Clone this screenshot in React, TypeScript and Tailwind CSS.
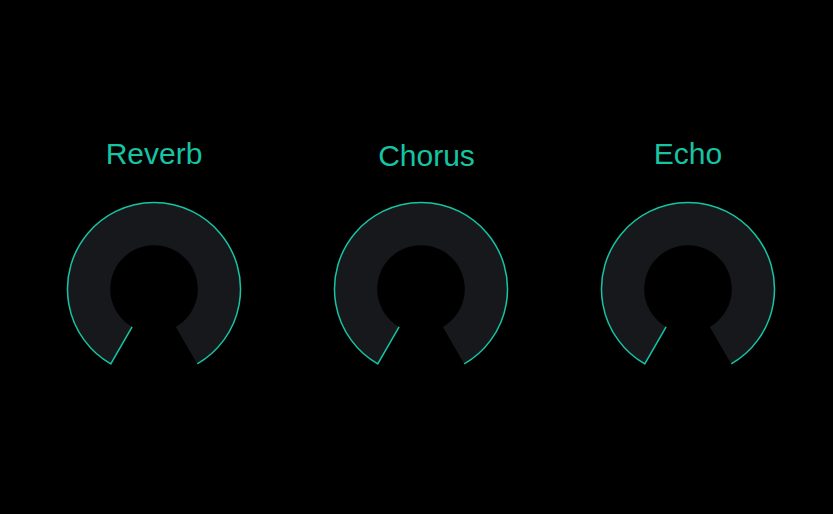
import React from "react";

const R = 86.5;
const r = 43.8;
const C = 88;
const s30 = 0.5;
const c30 = Math.sqrt(3) / 2;

const oL = [C - R * s30, C + R * c30];
const oR = [C + R * s30, C + R * c30];
const iL = [C - r * s30, C + r * c30];
const iR = [C + r * s30, C + r * c30];

const fillPath = `M ${oL[0]} ${oL[1]} A ${R} ${R} 0 1 1 ${oR[0]} ${oR[1]} L ${iR[0]} ${iR[1]} A ${r} ${r} 0 1 0 ${iL[0]} ${iL[1]} Z`;
const strokePath = `M ${iL[0]} ${iL[1]} L ${oL[0]} ${oL[1]} A ${R} ${R} 0 1 1 ${oR[0]} ${oR[1]}`;

const font = { fontFamily: '"Liberation Sans", Arial, sans-serif' };

function Knob() {
  return (
    <svg width="176" height="176" viewBox="0 0 176 176" className="block">
      <path d={fillPath} fill="#17181c" />
      <path d={strokePath} fill="none" stroke="#16c4a3" strokeWidth="1.5" strokeLinejoin="miter" />
    </svg>
  );
}

export default function App() {
  return (
    <div className="w-[833px] h-[514px] bg-black overflow-hidden">
      <div className="flex flex-row pt-[137px] pl-[66px] gap-[91px]">
        <div className="flex flex-col items-center w-[176px]">
          <div className="text-[30px] leading-[34px] h-[34px] text-[#16c4a3] whitespace-nowrap" style={font}>
            Reverb
          </div>
          <div className="mt-[30px]">
            <Knob />
          </div>
        </div>
        <div className="flex flex-col items-center w-[176px]">
          <div
            className="text-[30px] leading-[34px] h-[34px] text-[#16c4a3] whitespace-nowrap ml-[11px] mt-[2px] -mb-[2px]"
            style={font}
          >
            Chorus
          </div>
          <div className="mt-[30px]">
            <Knob />
          </div>
        </div>
        <div className="flex flex-col items-center w-[176px]">
          <div className="text-[30px] leading-[34px] h-[34px] text-[#16c4a3] whitespace-nowrap" style={font}>
            Echo
          </div>
          <div className="mt-[30px]">
            <Knob />
          </div>
        </div>
      </div>
    </div>
  );
}
